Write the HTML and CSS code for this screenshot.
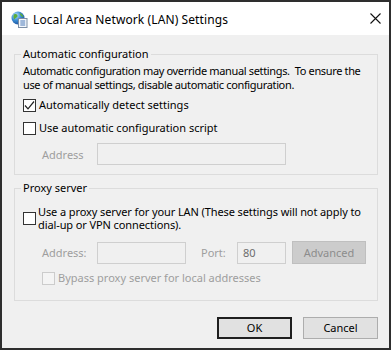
FILE: index.html
```html
<!DOCTYPE html>
<html>
<head>
<meta charset="utf-8">
<link rel="stylesheet" href="styles.css">
</head>
<body>
<div class="window">
  <div class="titlebar">
    <svg class="app-icon" width="17" height="17" viewBox="0 0 17 17">
      <defs>
        <radialGradient id="g" cx="0.35" cy="0.3" r="0.75">
          <stop offset="0" stop-color="#bfe4ff"/>
          <stop offset="0.5" stop-color="#3c8fd6"/>
          <stop offset="1" stop-color="#1b4f9a"/>
        </radialGradient>
      </defs>
      <circle cx="7" cy="7" r="6.5" fill="url(#g)"/>
      <path d="M3 3.5 C5 2.5 7 3.5 6.5 5.5 C6 7 4 6.5 3.5 8.5 C2.5 7.5 2 5 3 3.5Z" fill="#5cae3c"/>
      <path d="M8.5 2 C10.5 2.5 12 4 12.5 6 C11 6 9.5 5 8.5 2Z" fill="#5cae3c"/>
      <rect x="7.5" y="7.5" width="8.5" height="9" fill="#f4f8fc" stroke="#7d8fa6" stroke-width="1"/>
      <line x1="9.3" y1="10" x2="14.2" y2="10" stroke="#4a78b8" stroke-width="1"/>
      <line x1="9.3" y1="12" x2="14.2" y2="12" stroke="#4a78b8" stroke-width="1"/>
      <line x1="9.3" y1="14" x2="14.2" y2="14" stroke="#4a78b8" stroke-width="1"/>
    </svg>
    <span class="title">Local Area Network (LAN) Settings</span>
    <svg class="close" width="11" height="11" viewBox="0 0 11 11">
      <path d="M0.5 0.5 L10.5 10.5 M10.5 0.5 L0.5 10.5" stroke="#111" stroke-width="1.1"/>
    </svg>
  </div>
  <div class="content">
    <fieldset class="group group-auto">
      <legend>Automatic configuration</legend>
      <p class="note">Automatic configuration may override manual settings.&nbsp; To ensure the use of manual settings, disable automatic configuration.</p>
      <div class="check-row row-first">
        <span class="box"><svg width="11" height="11" viewBox="0 0 11 11"><polyline points="1,5.5 4,8.8 10,1.5" fill="none" stroke="#222" stroke-width="1.2"/></svg></span>
        <span>Automatically detect settings</span>
      </div>
      <div class="check-row row-second">
        <span class="box"></span>
        <span>Use automatic configuration script</span>
      </div>
      <div class="field-row">
        <span class="dim label-address">Address</span>
        <span class="input input-wide"></span>
      </div>
    </fieldset>
    <fieldset class="group group-proxy">
      <legend>Proxy server</legend>
      <div class="check-row two-line">
        <span class="box"></span>
        <span class="proxy-label">Use a proxy server for your LAN (These settings will not apply to dial&#8209;up or VPN connections).</span>
      </div>
      <div class="field-row proxy-fields">
        <span class="dim label-address">Address:</span>
        <span class="input input-addr"></span>
        <span class="dim label-port">Port:</span>
        <span class="input input-port">80</span>
        <span class="btn-disabled">Advanced</span>
      </div>
      <div class="check-row bypass">
        <span class="box box-disabled"></span>
        <span class="dim">Bypass proxy server for local addresses</span>
      </div>
    </fieldset>
    <div class="buttons">
      <span class="btn btn-default">OK</span>
      <span class="btn">Cancel</span>
    </div>
  </div>
</div>
</body>
</html>
```
FILE: styles.css
```css
* { box-sizing: border-box; }
html, body { margin: 0; padding: 0; background: #f0f0f0; }
body {
  font-family: "Noto Sans", "Open Sans", sans-serif;
  font-size: 11px;
  letter-spacing: 0;
  color: #000;
}
.window {
  width: 391px;
  height: 350px;
  border: 2px solid #2e2e2e;
  background: #f0f0f0;
  display: flex;
  flex-direction: column;
}
.titlebar {
  height: 33px;
  background: #fff;
  display: flex;
  align-items: center;
  padding-left: 9px;
  padding-right: 8px;
}
.app-icon { flex: none; margin-top: 2px; }
.title {
  margin-left: 5px;
  font-size: 12px;
  letter-spacing: 0.1px;
  flex: 1;
  margin-top: 1px;
}
.close { flex: none; margin-top: -1px; }
.content {
  flex: 1;
  padding: 0 11px 0 12px;
}
.group {
  margin: 0;
  border: 1px solid #dcdcdc;
  padding: 0 8px 0 8px;
}
.group legend {
  padding: 0 2px;
  margin-left: -2px;
  line-height: 16px;
}
.group-auto { margin-top: 11px; padding-top: 2px; padding-bottom: 9px; }
.group-proxy { margin-top: 5px; padding-top: 9px; padding-bottom: 14px; }
.note {
  margin: 0;
  line-height: 14px;
  letter-spacing: -0.35px;
}
.check-row {
  display: flex;
  align-items: center;
  line-height: 16px;
}
.row-first { margin-top: 5px; }
.row-second { margin-top: 7px; }
.two-line { line-height: 13px; }
.two-line .box { margin-right: 2px; }
.proxy-label { letter-spacing: -0.1px; }
.bypass { margin-top: 6px; padding-left: 19px; }
.box {
  flex: none;
  width: 13px;
  height: 13px;
  border: 1px solid #333;
  background: #fff;
  margin-right: 3px;
  display: flex;
  align-items: center;
  justify-content: center;
}
.box-disabled { border-color: #cccccc; background: #f4f4f4; }
.dim { color: #9e9e9e; }
.field-row {
  display: flex;
  align-items: center;
  margin-top: 7px;
}
.proxy-fields { margin-top: 10px; }
.label-address { width: 74px; padding-left: 19px; flex: none; }
.label-port { width: 51px; padding-left: 15px; flex: none; }
.input {
  flex: none;
  height: 22px;
  border: 1px solid #cfcfcf;
  background: #f0f0f0;
  color: #6d6d6d;
  padding-left: 5px;
  line-height: 20px;
}
.input-wide { width: 189px; }
.input-addr { width: 89px; }
.input-port { width: 49px; }
.btn-disabled {
  flex: none;
  margin-left: 6px;
  width: 74px;
  height: 23px;
  background: #cccccc;
  border: 1px solid #bfbfbf;
  color: #8c8c8c;
  text-align: center;
  line-height: 21px;
}
.buttons {
  display: flex;
  justify-content: flex-end;
  gap: 11px;
  margin-top: 16px;
}
.btn {
  width: 75px;
  height: 22px;
  background: #e1e1e1;
  border: 1px solid #adadad;
  text-align: center;
  line-height: 20px;
}
.btn-default {
  border: 2px solid #1f1f1f;
  line-height: 18px;
}
```
